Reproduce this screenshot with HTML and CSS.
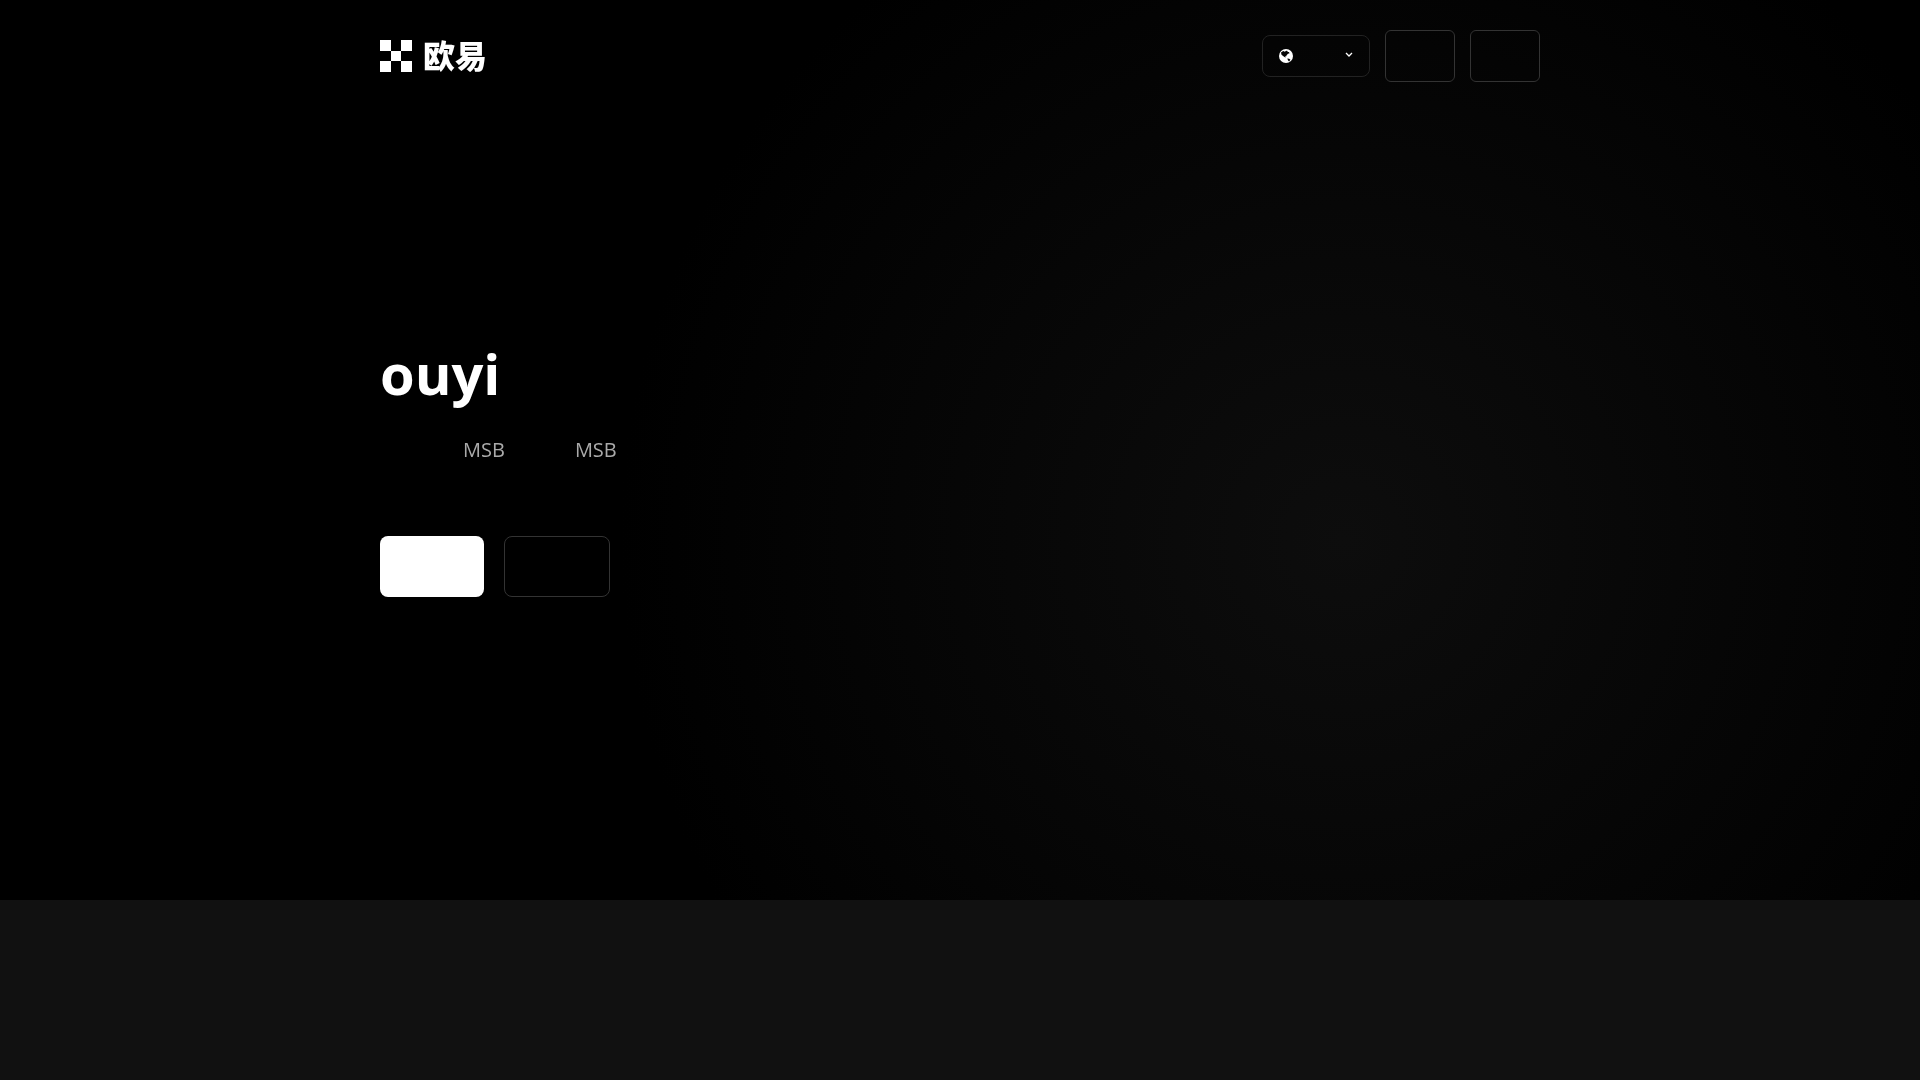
FILE: index.html
```html
<!DOCTYPE html>
<html lang="zh-CN">
<head>
    <meta charset="UTF-8">
    <meta name="viewport" content="width=device-width, initial-scale=1.0">
    <title>ouyi</title>
    <link rel="stylesheet" href="styles.css">
</head>
<body>
    <div class="hero">
        <header class="container header">
            <a class="logo" href="#" aria-label="欧易">
                <svg class="logo-mark" viewBox="0 0 32 32" aria-hidden="true">
                    <path fill="#fff" d="M0 0h11v11H0zM21 0h11v11H21zM11 11h10v10H11zM0 21h11v11H0zM21 21h11v11H21z"/>
                </svg>
                <span class="logo-name">欧易</span>
            </a>
            <nav class="actions">
                <button type="button" class="lang-btn" aria-label="Language">
                    <svg class="globe" viewBox="0 0 14 14" aria-hidden="true">
                        <circle cx="7" cy="7" r="7" fill="#fff"/>
                        <path fill="#050505" d="M2 3.4 4.2 2l1.6.7 1.4-.9 1.6.2-.5 1 1.6.1.7 1.1-1.6.5-1.4 1.6-.5 1.2-1.2-.2.8 1.5L4.4 7.3 2.5 5.8zM8.3 9.5l1.9.3 1.2 1-1.3 1.6-1-.9z"/>
                    </svg>
                    <svg class="chevron" viewBox="0 0 8 8" aria-hidden="true">
                        <path fill="none" stroke="#fff" stroke-width="1.3" d="M1 1l3 3 3-3"/>
                    </svg>
                </button>
                <button type="button" class="auth-btn" aria-label="Log in"></button>
                <button type="button" class="auth-btn" aria-label="Sign up"></button>
            </nav>
        </header>

        <main class="container intro">
            <h1>ouyi</h1>
            <p class="licences"><span>MSB</span><span>MSB</span></p>
            <div class="cta">
                <button type="button" class="btn btn-primary" aria-label="Get started"></button>
                <button type="button" class="btn btn-outline" aria-label="Download"></button>
            </div>
        </main>
    </div>
</body>
</html>
```

FILE: styles.css
```css
* {
    margin: 0;
    padding: 0;
    box-sizing: border-box;
}

body {
    font-family: "Open Sans", "Noto Sans CJK SC", sans-serif;
    background-color: #111;
    color: #fff;
}

.hero {
    min-height: 900px;
    background: #000 radial-gradient(circle at 70% 60%, #0d0d0d 0%, #000 50%);
}

.container {
    max-width: 1200px;
    margin: 0 auto;
    padding: 0 20px;
    will-change: transform;
}

/* Header */
.header {
    display: flex;
    justify-content: space-between;
    align-items: center;
    padding-top: 30px;
    padding-bottom: 30px;
}

.logo {
    display: flex;
    align-items: center;
    gap: 11px;
    color: #fff;
    text-decoration: none;
}

.logo-mark {
    width: 32px;
    height: 32px;
}

.logo-name {
    padding-bottom: 4px;
    font-family: "Noto Sans CJK SC", sans-serif;
    font-size: 32px;
    font-weight: 900;
    line-height: 32px;
}

.actions {
    display: flex;
    align-items: center;
    gap: 15px;
}

button {
    background: transparent;
    border: 1px solid #333;
    border-radius: 6px;
    cursor: pointer;
}

.lang-btn {
    display: flex;
    align-items: center;
    justify-content: space-between;
    width: 108px;
    height: 42px;
    padding: 0 16px;
    border-color: #222;
    border-radius: 8px;
}

.globe {
    width: 14px;
    height: 14px;
}

.chevron {
    width: 8px;
    height: 8px;
}

.auth-btn {
    width: 70px;
    height: 52px;
}

/* Intro */
.intro {
    padding-top: 228px;
}

h1 {
    font-size: 56px;
    font-weight: 700;
    line-height: 67px;
}

.licences {
    display: flex;
    gap: 70px;
    margin-top: 25px;
    padding-left: 83px;
    color: #aaa;
    font-size: 20px;
    line-height: 36px;
}

.cta {
    display: flex;
    gap: 20px;
    margin-top: 68px;
}

.btn {
    width: 106px;
    height: 61px;
    border-radius: 8px;
}

.btn-primary {
    width: 104px;
    background: #fff;
    border: none;
}
```
